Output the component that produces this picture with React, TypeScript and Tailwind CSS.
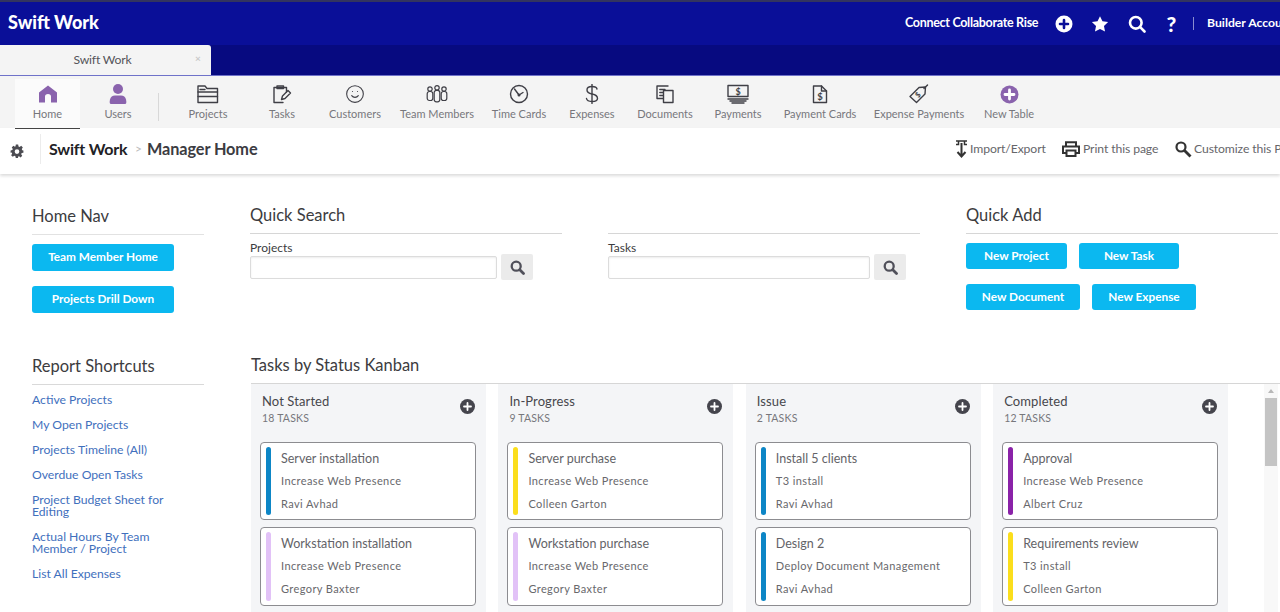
import React from "react";
import { Smile } from "lucide-react";

const stroke = { fill: "none", stroke: "#3f3f46", strokeWidth: 1.4, strokeLinecap: "round" as const, strokeLinejoin: "round" as const };

const Icons: Record<string, React.ReactNode> = {
  Home: (
    <svg width="20" height="20" viewBox="0 0 20 20"><path fill="#8a63ad" d="M10 1.500 19 8.500V18.500H13V12.500Q13 10 10 10T7 12.500V18.500H1V8.500Z" /></svg>
  ),
  Users: (
    <svg width="20" height="22" viewBox="0 0 20 22"><circle cx="10" cy="6" r="5" fill="#8a63ad" /><path fill="#8a63ad" d="M3 21Q1 21 2 16.500 3 12.500 7 12.500H13Q17 12.500 18 16.500 19 21 17 21Z" /></svg>
  ),
  Projects: (
    <svg width="24" height="20" viewBox="0 0 24 20"><g {...stroke}><path d="M2 18.500V2H9L11 4.500H21.500V18.500Z" /><path d="M2 8H21.500M2 12.500H21.500" /><path d="M4 5.500H9" /></g></svg>
  ),
  Tasks: (
    <svg width="20" height="20" viewBox="0 0 20 20"><g {...stroke}><path d="M14.500 8V3.500H2V18.500H11" /><path d="M5 4.500V2H11.500V4.500Z" /><path d="M9.500 15.500 10.500 12 16 6.500 18.500 9 13 14.500Z" /></g></svg>
  ),
  Customers: <Smile size={20} strokeWidth={1.3} color="#3f3f46" />,
  "Team Members": (
    <svg width="24" height="20" viewBox="0 0 24 20"><g {...stroke} strokeWidth={1.2}><circle cx="5" cy="5" r="2.200" /><circle cx="12" cy="3.800" r="2.200" /><circle cx="19" cy="5" r="2.200" /><rect x="2.200" y="7.500" width="5.600" height="9" rx="2.200" /><rect x="9.200" y="6.300" width="5.600" height="11.500" rx="2.200" /><rect x="16.200" y="7.500" width="5.600" height="9" rx="2.200" /></g></svg>
  ),
  "Time Cards": (
    <svg width="20" height="20" viewBox="0 0 20 20"><g {...stroke}><circle cx="10" cy="10" r="8.500" /><path d="M5.500 5 10 11 14 8.500" /><circle cx="10" cy="11" r="0.800" /></g></svg>
  ),
  Expenses: (
    <svg width="14" height="20" viewBox="0 0 14 20"><g {...stroke}><path d="M12 5Q11.500 2.500 7 2.500 2 2.500 2 6 2 9 7 10 12.500 11 12.500 14.500 12.500 17.500 7 17.500 2 17.500 1.500 14.500" /><path d="M7 0.500V19.500" /></g></svg>
  ),
  Documents: (
    <svg width="20" height="20" viewBox="0 0 20 20"><g {...stroke}><path d="M13 2H2V14.500H8" /><path d="M9.500 6.500H18V18.500H8.500V6.500" /><path d="M4.800 5.500H10M4.800 8.500H8M4.800 11.500H8" /></g></svg>
  ),
  Payments: (
    <svg width="22" height="20" viewBox="0 0 22 20"><g {...stroke}><rect x="1" y="1.500" width="20" height="11" /><path d="M1 15H21M3 17H19M5 19H17" /></g><text x="11" y="11" textAnchor="middle" fontSize="9" fontWeight="700" fill="#3f3f46" fontFamily="Lato">$</text></svg>
  ),
  "Payment Cards": (
    <svg width="16" height="20" viewBox="0 0 16 20"><g {...stroke}><path d="M1.500 2H9.500L14.500 7V18.500H1.500Z" /><path d="M9.500 2V7H14.500" /></g><text x="8" y="16" textAnchor="middle" fontSize="9.500" fontWeight="700" fill="#3f3f46" fontFamily="Lato">$</text></svg>
  ),
  "Expense Payments": (
    <svg width="20" height="20" viewBox="0 0 20 20"><g {...stroke}><path d="M1 12.500 10 3.500 16.500 3 16 10 7.500 18.500Z" /><path d="M15 4.500 18.500 1" /></g><text x="9" y="13.500" textAnchor="middle" fontSize="7.500" fontWeight="700" fill="#3f3f46" fontFamily="Lato" transform="rotate(-45 9 11)">$</text></svg>
  ),
  "New Table": (
    <svg width="19" height="19" viewBox="0 0 19 19"><circle cx="9.500" cy="9.500" r="9" fill="#8a63ad" /><path d="M9.500 5V14M5 9.500H14" stroke="#fff" strokeWidth="2.800" strokeLinecap="round" /></svg>
  ),
};

const navItems: [string, string][] = [
  ["Projects", "w-[74px]"],
  ["Tasks", "w-[74px]"],
  ["Customers", "w-[72px]"],
  ["Team Members", "w-[92px]"],
  ["Time Cards", "w-[72px]"],
  ["Expenses", "w-[74px]"],
  ["Documents", "w-[72px]"],
  ["Payments", "w-[74px]"],
  ["Payment Cards", "w-[90px]"],
  ["Expense Payments", "w-[108px]"],
  ["New Table", "w-[72px]"],
];

function NavItem({ label, cls }: { label: string; cls: string }) {
  return (
    <div className={`${cls} flex shrink-0 flex-col items-center`}>
      <div className="flex h-[24px] items-center justify-center">{Icons[label]}</div>
      <div className="mt-[1px] whitespace-nowrap text-[11px] leading-[14px] text-[#77777c]">{label}</div>
    </div>
  );
}

function Heading({ children, cls = "" }: { children: React.ReactNode; cls?: string }) {
  return <div className={`border-b border-[#d6d6d6] pb-[6px] pt-[1px] text-[16.500px] leading-[24px] text-[#3c3c40] ${cls}`}>{children}</div>;
}

function CyanButton({ label, cls }: { label: string; cls: string }) {
  return (
    <div className={`${cls} flex items-center justify-center rounded-[3px] bg-[#0bb8f0] pb-[1px] text-[11.800px] font-bold text-white`}>{label}</div>
  );
}

function SearchField({ label, inputCls }: { label: string; inputCls: string }) {
  return (
    <div className="w-[312px]">
      <Heading>{label === "Projects" ? "Quick Search" : "\u00a0"}</Heading>
      <div className="mt-[7px] text-[12px] leading-[14px] text-[#3c3c40]">{label}</div>
      <div className="-mt-[1px] flex items-center">
        <div className={`${inputCls} h-[23px] rounded-[2px] border border-[#dcdcdc] shadow-[inset_0_1px_2px_rgba(0,0,0,0.08)]`} />
        <div className="ml-[4px] flex h-[26px] w-[32px] items-center justify-center rounded-[2px] bg-[#ebebeb]">
          <svg width="15" height="15" viewBox="0 0 15 15" fill="none" stroke="#50505a" strokeWidth="2.300" strokeLinecap="round"><circle cx="6.200" cy="6.200" r="4.500" /><path d="M10 10 13.500 13.500" strokeWidth="2.800" /></svg>
        </div>
      </div>
    </div>
  );
}

type Card = { title: string; sub: string; who: string; bar: string };
const columns: { name: string; count: string; cards: Card[] }[] = [
  {
    name: "Not Started",
    count: "18 TASKS",
    cards: [
      { title: "Server installation", sub: "Increase Web Presence", who: "Ravi Avhad", bar: "bg-[#0d86c6]" },
      { title: "Workstation installation", sub: "Increase Web Presence", who: "Gregory Baxter", bar: "bg-[#e2c2f7]" },
    ],
  },
  {
    name: "In-Progress",
    count: "9 TASKS",
    cards: [
      { title: "Server purchase", sub: "Increase Web Presence", who: "Colleen Garton", bar: "bg-[#fbde1c]" },
      { title: "Workstation purchase", sub: "Increase Web Presence", who: "Gregory Baxter", bar: "bg-[#e2c2f7]" },
    ],
  },
  {
    name: "Issue",
    count: "2 TASKS",
    cards: [
      { title: "Install 5 clients", sub: "T3 install", who: "Ravi Avhad", bar: "bg-[#0d86c6]" },
      { title: "Design 2", sub: "Deploy Document Management", who: "Ravi Avhad", bar: "bg-[#0d86c6]" },
    ],
  },
  {
    name: "Completed",
    count: "12 TASKS",
    cards: [
      { title: "Approval", sub: "Increase Web Presence", who: "Albert Cruz", bar: "bg-[#8a22a8]" },
      { title: "Requirements review", sub: "T3 install", who: "Colleen Garton", bar: "bg-[#fbde1c]" },
    ],
  },
];

function KanbanCard({ card, cls }: { card: Card; cls: string }) {
  return (
    <div className={`${cls} flex rounded-[4px] border border-[#8c8c90] bg-white py-[4px] pl-[5px]`}>
      <div className={`${card.bar} w-[5px] rounded-[3px]`} />
      <div className="ml-[10px] flex flex-col pt-[2px]">
        <div className="text-[12.500px] leading-[20px] text-[#636368]">{card.title}</div>
        <div className="mt-[3px] text-[11px] leading-[18px] tracking-[0.4px] text-[#68686c]">{card.sub}</div>
        <div className="mt-[5px] text-[11px] leading-[18px] tracking-[0.4px] text-[#68686c]">{card.who}</div>
      </div>
    </div>
  );
}

const links = [
  "Active Projects",
  "My Open Projects",
  "Projects Timeline (All)",
  "Overdue Open Tasks",
  "Project Budget Sheet for Editing",
  "Actual Hours By Team Member / Project",
  "List All Expenses",
];

export default function App() {
  return (
    <div className="h-[612px] w-[1280px] overflow-hidden bg-white font-['Lato','Liberation_Sans',sans-serif]">
      {/* Top bar */}
      <div className="flex h-[45px] items-center overflow-hidden border-t-2 border-[#33345f] bg-[#0a0f98] text-white">
        <div className="mb-[3px] ml-[8px] w-[897px] shrink-0 text-[18px] font-black leading-[20px]">Swift Work</div>
        <div className="w-[150px] shrink-0 whitespace-nowrap text-[12.500px] font-bold tracking-[-0.3px]">Connect Collaborate Rise</div>
        <svg className="shrink-0" width="18" height="18" viewBox="0 0 18 18"><circle cx="9" cy="9" r="8.500" fill="#fff" /><path d="M9 5V13M5 9H13" stroke="#0a0f98" strokeWidth="2.600" strokeLinecap="round" /></svg>
        <svg className="ml-[18px] shrink-0" width="18" height="18" viewBox="0 0 24 24"><path fill="#fff" d="M12 1.500 15.300 8.400 22.800 9.400 17.300 14.600 18.700 22.100 12 18.500 5.300 22.100 6.700 14.600 1.200 9.400 8.700 8.400Z" /></svg>
        <svg className="ml-[19px] shrink-0" width="18" height="18" viewBox="0 0 18 18" fill="none" stroke="#fff" strokeWidth="2.600" strokeLinecap="round"><circle cx="7.800" cy="7.800" r="5.800" /><path d="M12.200 12.200 16.500 16.500" /></svg>
        <div className="ml-[19px] w-[13px] shrink-0 text-center text-[21px] font-black leading-[20px]">?</div>
        <div className="ml-[15px] h-[13px] w-px shrink-0 bg-[#8a8dd0]" />
        <div className="ml-[13px] shrink-0 whitespace-nowrap text-[12.200px] font-bold">Builder Account</div>
      </div>
      {/* Tab bar */}
      <div className="flex h-[30px] bg-[#070a80]">
        <div className="relative flex w-[211px] items-center justify-center rounded-tr-[3px] bg-[#f4f4f4] text-[12.200px] tracking-[-0.2px] text-[#55555a]">
          <span className="-ml-[6px]">Swift Work</span>
          <span className="absolute left-[195px] top-[7px] text-[10px] font-bold leading-[12px] text-[#c9c9c9]">×</span>
        </div>
      </div>
      {/* Toolbar */}
      <div className="flex h-[53px] items-start border-t border-[#6f72c9] bg-[#f4f4f4]">
        <div className="ml-[15px] mt-[3px] flex h-[50px] w-[65px] flex-col items-center border-b border-[#444] bg-[#fbfbfb] pt-[4px]">
          <div className="flex h-[22px] items-center">{Icons.Home}</div>
          <div className="mt-[2px] text-[11px] leading-[14px] text-[#77777c]">Home</div>
        </div>
        <div className="mt-[3px] flex h-[50px] w-[76px] flex-col items-center pt-[4px]">
          <div className="flex h-[22px] items-center">{Icons.Users}</div>
          <div className="mt-[2px] text-[11px] leading-[14px] text-[#77777c]">Users</div>
        </div>
        <div className="ml-[2px] mt-[17px] h-[28px] w-px bg-[#d8d8d8]" />
        <div className="ml-[12px] mt-[6px] flex">
          {navItems.map(([l, c]) => (
            <NavItem key={l} label={l} cls={c} />
          ))}
        </div>
      </div>
      {/* Breadcrumb */}
      <div className="flex h-[46px] items-center overflow-hidden bg-white pb-[4px] shadow-[0_2px_3px_rgba(0,0,0,0.14)]">
        <svg className="ml-[10px] mt-[3px] shrink-0" width="14" height="14" viewBox="0 0 24 24"><path fill="#4c4c52" fillRule="evenodd" d="M10 1h4l.6 3.200 1.900.8 2.700-1.800 2.800 2.800-1.800 2.700.8 1.900L23 11v4l-3 .6-.8 1.900 1.800 2.700-2.800 2.800-2.700-1.800-1.900.8L13.900 24h-4l-.6-3-1.900-.8-2.700 1.800-2.800-2.800 1.800-2.700-.8-1.900L1 15v-4l3-.6.8-1.900L3 5.800 5.800 3l2.700 1.800 1-.8ZM12 9a4 4 0 1 0 0 8 4 4 0 0 0 0-8Z" /></svg>
        <div className="ml-[16px] h-[30px] w-px shrink-0 bg-[#ececec]" />
        <div className="ml-[8px] w-[86px] shrink-0 whitespace-nowrap text-[16px] font-bold tracking-[-0.2px] text-[#222226]">Swift Work</div>
        <div className="w-[12px] shrink-0 text-[12px] text-[#bbb]">&gt;</div>
        <div className="w-[808px] shrink-0 whitespace-nowrap text-[16.300px] font-bold tracking-[-0.1px] text-[#3c3c42]">Manager Home</div>
        <svg className="shrink-0" width="13" height="18" viewBox="0 0 13 18" fill="none" stroke="#333" strokeWidth="1.500"><path d="M1 1H12M1 4.500H3.500V1M12 4.500H9.500V1" /><path d="M6.500 3V16M2.500 12 6.500 16.500 10.500 12" strokeWidth="2" /></svg>
        <div className="ml-[2px] w-[92px] shrink-0 whitespace-nowrap text-[12.200px] tracking-[-0.1px] text-[#66666a]">Import/Export</div>
        <svg className="shrink-0" width="18" height="16" viewBox="0 0 18 16" fill="none" stroke="#333" strokeWidth="2"><path d="M4 5V1.200H14V5" /><path d="M4 12H1V5.500H17V12H14" /><path d="M4.500 9.500H13.500V15H4.500Z" /></svg>
        <div className="ml-[3px] w-[92px] shrink-0 whitespace-nowrap text-[12.200px] tracking-[-0.1px] text-[#66666a]">Print this page</div>
        <svg className="shrink-0" width="17" height="17" viewBox="0 0 17 17" fill="none" stroke="#333" strokeWidth="2.200"><circle cx="6" cy="6" r="4.500" /><path d="M9.500 9.500 15.500 15.500" strokeWidth="2.800" /></svg>
        <div className="ml-[2px] shrink-0 whitespace-nowrap text-[12.200px] tracking-[-0.1px] text-[#66666a]">Customize this Page</div>
      </div>
      {/* Top sections */}
      <div className="flex h-[177px] pt-[28px]">
        <div className="ml-[32px] w-[172px] shrink-0">
          <Heading cls="!pt-[2px] !border-[#e2e2e2]">Home Nav</Heading>
          <div className="mt-[9px] flex flex-col gap-[15px]">
            <CyanButton label="Team Member Home" cls="h-[27px] w-[142px]" />
            <CyanButton label="Projects Drill Down" cls="h-[27px] w-[142px]" />
          </div>
        </div>
        <div className="ml-[46px] flex w-[670px] shrink-0 gap-[46px]">
          <SearchField label="Projects" inputCls="w-[247px]" />
          <SearchField label="Tasks" inputCls="w-[262px]" />
        </div>
        <div className="ml-[46px] w-[312px] shrink-0">
          <Heading>Quick Add</Heading>
          <div className="mt-[9px] flex gap-[12px]">
            <CyanButton label="New Project" cls="h-[26px] w-[101px]" />
            <CyanButton label="New Task" cls="h-[26px] w-[100px]" />
          </div>
          <div className="mt-[15px] flex gap-[12px]">
            <CyanButton label="New Document" cls="h-[26px] w-[114px]" />
            <CyanButton label="New Expense" cls="h-[26px] w-[104px]" />
          </div>
        </div>
      </div>
      {/* Bottom sections */}
      <div className="flex">
        <div className="ml-[32px] w-[172px] shrink-0">
          <div className="mt-[3px]">
            <Heading cls="!pt-0 !border-[#d9d9d9]">Report Shortcuts</Heading>
          </div>
          <div className="mt-[9px] flex flex-col gap-[12.400px]">
            {links.map((l) => (
              <div key={l} className="w-[140px] text-[12.200px] leading-[12.500px] text-[#3f70bd]">{l}</div>
            ))}
          </div>
        </div>
        <div className="ml-[47px] min-w-0 flex-1">
          <div className="border-b border-[#d6d6d6] pb-[6px] pt-[2px] text-[16.500px] leading-[24px] text-[#3c3c40]">Tasks by Status Kanban</div>
          <div className="relative flex gap-[12.400px]">
            {columns.map((c) => (
              <div key={c.name} className="w-[235px] shrink-0 bg-[#f4f5f7] pl-[9px] pr-[10px]">
                <div className="flex h-[58px] items-start justify-between pl-[2px]">
                  <div className="pt-[9px]">
                    <div className="text-[13px] leading-[16px] tracking-[0.1px] text-[#47474c]">{c.name}</div>
                    <div className="mt-[2px] text-[10.500px] leading-[14px] tracking-[0.2px] text-[#77777c]">{c.count}</div>
                  </div>
                  <svg className="mr-[1px] mt-[15px]" width="15" height="15" viewBox="0 0 15 15"><circle cx="7.500" cy="7.500" r="7.500" fill="#45454d" /><path d="M7.500 4V11M4 7.500H11" stroke="#fff" strokeWidth="1.800" strokeLinecap="round" /></svg>
                </div>
                <KanbanCard card={c.cards[0]} cls="h-[78px]" />
                <KanbanCard card={c.cards[1]} cls="mt-[7px] h-[79px]" />
                <div className="h-[10px]" />
              </div>
            ))}
            <div className="absolute bottom-0 right-[2px] top-0 w-[14px] bg-[#f8f8f8]">
              <div className="mx-auto mt-[5px] h-0 w-0 border-x-[3px] border-b-[4px] border-x-transparent border-b-[#b8b8b8]" />
              <div className="mx-auto mt-[5px] h-[68px] w-[12px] bg-[#c4c4c4]" />
            </div>
          </div>
        </div>
      </div>
    </div>
  );
}
